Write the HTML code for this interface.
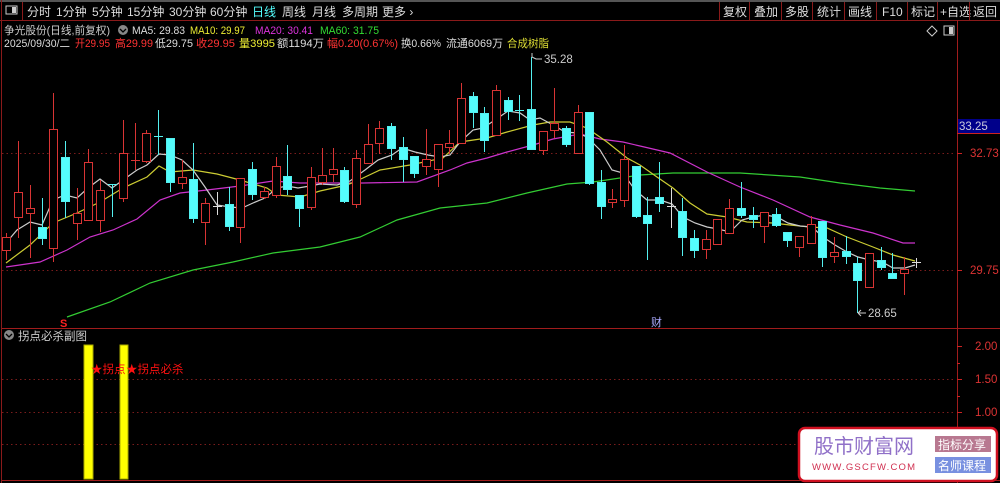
<!DOCTYPE html>
<html><head><meta charset="utf-8">
<style>
body{margin:0;background:#000;width:1000px;height:483px;overflow:hidden;font-family:"Liberation Sans","Noto Sans CJK SC",sans-serif;}
svg{position:absolute;left:0;top:0}
text{font-family:"Liberation Sans","Noto Sans CJK SC",sans-serif;}
</style></head><body>
<svg width="1000" height="483" viewBox="0 0 1000 483">
<rect width="1000" height="483" fill="#000"/>
<rect x="0" y="0" width="1000" height="2" fill="#555"/>
<line x1="0" y1="20.5" x2="1000" y2="20.5" stroke="#8a1a1a"/>
<line x1="1.5" y1="0" x2="1.5" y2="483" stroke="#8a1a1a"/>
<line x1="22.5" y1="2" x2="22.5" y2="20" stroke="#8a1a1a"/>
<rect x="6" y="6" width="11" height="8" fill="none" stroke="#ccc"/><rect x="12" y="7" width="4" height="6" fill="#ccc"/>
<g font-size="12" fill="#ddd">
<text x="27" y="16">分时</text><text x="56" y="16">1分钟</text><text x="92" y="16">5分钟</text><text x="127" y="16">15分钟</text><text x="169" y="16">30分钟</text><text x="210" y="16">60分钟</text>
<text x="252" y="16" fill="#5ff">日线</text><text x="282" y="16">周线</text><text x="312" y="16">月线</text><text x="342" y="16">多周期</text><text x="382" y="16">更多 ›</text>
<text x="723" y="16">复权</text><text x="754" y="16">叠加</text><text x="785" y="16">多股</text><text x="817" y="16">统计</text><text x="848" y="16">画线</text><text x="882" y="16">F10</text><text x="911" y="16">标记</text><text x="940" y="16">+自选</text><text x="973" y="16">返回</text>
</g>
<g stroke="#8a1a1a"><line x1="719.5" y1="2" x2="719.5" y2="20"/><line x1="749.5" y1="2" x2="749.5" y2="20"/><line x1="781.5" y1="2" x2="781.5" y2="20"/><line x1="812.5" y1="2" x2="812.5" y2="20"/><line x1="844.5" y1="2" x2="844.5" y2="20"/><line x1="876.5" y1="2" x2="876.5" y2="20"/><line x1="907.5" y1="2" x2="907.5" y2="20"/><line x1="937.5" y1="2" x2="937.5" y2="20"/><line x1="969.5" y1="2" x2="969.5" y2="20"/></g>
<g font-size="11">
<text x="4" y="34" fill="#ccc" textLength="106" lengthAdjust="spacingAndGlyphs">争光股份(日线,前复权)</text>
<circle cx="123" cy="30" r="5" fill="#888"/><path d="M120 29 L123 32 L126 29" stroke="#000" fill="none" stroke-width="1.3"/>
<text x="132" y="34" fill="#ddd" textLength="53" lengthAdjust="spacingAndGlyphs">MA5: 29.83</text><text x="190" y="34" fill="#ee3" textLength="55" lengthAdjust="spacingAndGlyphs">MA10: 29.97</text><text x="255" y="34" fill="#d3d" textLength="58" lengthAdjust="spacingAndGlyphs">MA20: 30.41</text><text x="320" y="34" fill="#3d3" textLength="59" lengthAdjust="spacingAndGlyphs">MA60: 31.75</text>
<text x="4" y="47" fill="#ddd" textLength="66" lengthAdjust="spacingAndGlyphs">2025/09/30/二</text>
<text x="75" y="47" fill="#f33" textLength="35" lengthAdjust="spacingAndGlyphs">开29.95</text><text x="115" y="47" fill="#f33" textLength="38" lengthAdjust="spacingAndGlyphs">高29.99</text><text x="155" y="47" fill="#ddd" textLength="38" lengthAdjust="spacingAndGlyphs">低29.75</text><text x="196" y="47" fill="#f33" textLength="39" lengthAdjust="spacingAndGlyphs">收29.95</text><text x="239" y="47" fill="#ee3" textLength="36" lengthAdjust="spacingAndGlyphs">量3995</text>
<text x="277" y="47" fill="#ddd" textLength="47" lengthAdjust="spacingAndGlyphs">额1194万</text><text x="327" y="47" fill="#f33" textLength="71" lengthAdjust="spacingAndGlyphs">幅0.20(0.67%)</text><text x="401" y="47" fill="#ddd" textLength="40" lengthAdjust="spacingAndGlyphs">换0.66%</text><text x="446" y="47" fill="#ddd" textLength="57" lengthAdjust="spacingAndGlyphs">流通6069万</text><text x="507" y="47" fill="#dd3" textLength="42" lengthAdjust="spacingAndGlyphs">合成树脂</text>
</g>
<path d="M932 26 L937 31 L932 36 L927 31Z" fill="none" stroke="#ccc"/>
<rect x="944" y="26" width="10" height="9" fill="none" stroke="#ccc"/><rect x="949" y="27" width="4" height="7" fill="#ccc"/>
<line x1="957.5" y1="20" x2="957.5" y2="483" stroke="#a01c1c"/>
<line x1="2" y1="328.5" x2="1000" y2="328.5" stroke="#a01c1c"/>
<line x1="2" y1="480.5" x2="1000" y2="480.5" stroke="#a01c1c"/>
<g stroke="#7a1c1c" stroke-dasharray="1.5,3"><line x1="2" y1="153.5" x2="955" y2="153.5"/><line x1="2" y1="270.5" x2="955" y2="270.5"/><line x1="2" y1="379.5" x2="955" y2="379.5"/><line x1="2" y1="412.5" x2="955" y2="412.5"/><line x1="2" y1="444.5" x2="955" y2="444.5"/></g>
<rect x="958" y="119" width="42" height="15" fill="#00008a"/><line x1="957" y1="133.5" x2="1000" y2="133.5" stroke="#c22"/>
<text x="959" y="130" font-size="11.5" fill="#ccd">33.25</text>
<g font-size="11.5" fill="#d33"><text x="970" y="157">32.73</text><text x="970" y="274">29.75</text><text x="975" y="350">2.00</text><text x="975" y="383">1.50</text><text x="975" y="416">1.00</text></g>
<g stroke="#c22"><line x1="957" y1="153.5" x2="962" y2="153.5"/><line x1="957" y1="270.5" x2="962" y2="270.5"/><line x1="957" y1="346.5" x2="962" y2="346.5"/><line x1="957" y1="363.5" x2="960" y2="363.5"/><line x1="957" y1="379.5" x2="962" y2="379.5"/><line x1="957" y1="396.5" x2="960" y2="396.5"/><line x1="957" y1="412.5" x2="962" y2="412.5"/></g>
<g fill="none" stroke-width="1.2">
<polyline stroke="#3c3" points="67,317 110,302 150,283 193,270 233,262 273,253 320,247 360,237 397,220 440,208 487,203 527,193 567,184 593,182 640,175 673,173 740,173 800,177 840,183 880,188 915,191"/>
<polyline stroke="#c3c" points="6,267 40,262 67,250 90,237 113,230 137,219 160,200 180,193 207,190 240,186 273,181 300,183 320,183 363,183 417,182 450,170 467,163 487,158 507,152 533,145 553,139 580,134 600,139 623,142 640,146 670,153 707,172 740,187 773,200 810,217 840,225 873,233 903,243 915,243"/>
<polyline stroke="#cc3" points="6,263 30,245 53,223 77,213 100,202 123,188 147,177 159,166 170,172 193,170 217,174 240,180 267,188 277,195 300,197 320,191 347,185 363,178 380,170 410,165 443,158 460,142 487,138 507,132 533,125 550,122 570,122 587,128 607,142 627,158 640,165 657,177 673,188 690,203 707,214 727,217 747,222 773,223 790,225 810,227 827,228 847,237 873,247 893,255 915,261"/>
<polyline stroke="#ccc" points="6,243 17,230 30,222 42,225 53,200 65,195 77,198 88,188 100,179 112,188 123,180 137,170 147,165 159,154 170,155 182,160 193,170 205,187 217,205 230,207 242,208 253,203 265,198 277,188 287,186 298,188 310,186 320,184 337,185 350,181 365,170 378,160 392,155 402,148 415,152 428,155 440,157 450,155 460,142 473,130 483,128 495,120 508,111 520,113 530,120 540,118 553,125 565,132 577,133 587,137 600,150 612,170 623,173 635,190 647,200 660,200 672,204 683,217 695,223 707,227 718,229 730,232 742,220 753,217 765,215 777,217 788,223 800,226 812,227 823,237 835,245 847,252 858,257 870,260 882,262 893,268 905,268 915,265"/>
</g>
<g stroke="#d83434" fill="#000" stroke-width="1">
<line x1="6.5" y1="233" x2="6.5" y2="260"/><rect x="2.5" y="237.5" width="8" height="13"/>
<line x1="18.5" y1="141" x2="18.5" y2="238"/><rect x="14.5" y="192.5" width="8" height="25"/>
<line x1="30.5" y1="185" x2="30.5" y2="258"/><rect x="26.5" y="208.5" width="8" height="5"/>
<line x1="53.5" y1="93" x2="53.5" y2="262"/><rect x="49.5" y="129.5" width="8" height="119"/>
<line x1="77.5" y1="188" x2="77.5" y2="240"/><rect x="73.5" y="213.5" width="8" height="10"/>
<line x1="88.5" y1="149" x2="88.5" y2="220"/><rect x="84.5" y="162.5" width="8" height="58"/>
<line x1="100.5" y1="180" x2="100.5" y2="232"/><rect x="96.5" y="190.5" width="8" height="30"/>
<line x1="123.5" y1="120" x2="123.5" y2="202"/><rect x="119.5" y="153.5" width="8" height="45"/>
<line x1="135.5" y1="123" x2="135.5" y2="170"/><line x1="131" y1="160.5" x2="140" y2="160.5"/>
<line x1="146.5" y1="130" x2="146.5" y2="163"/><rect x="142.5" y="133.5" width="8" height="28"/>
<line x1="182.5" y1="160" x2="182.5" y2="189"/><rect x="178.5" y="177.5" width="8" height="6"/>
<line x1="205.5" y1="198" x2="205.5" y2="245"/><rect x="201.5" y="203.5" width="8" height="19"/>
<line x1="240.5" y1="178" x2="240.5" y2="243"/><rect x="236.5" y="178.5" width="8" height="49"/>
<line x1="264.5" y1="187" x2="264.5" y2="199"/><rect x="260.5" y="191.5" width="8" height="6"/>
<line x1="276.5" y1="157" x2="276.5" y2="198"/><rect x="272.5" y="166.5" width="8" height="29"/>
<line x1="311.5" y1="167" x2="311.5" y2="210"/><rect x="307.5" y="177.5" width="8" height="30"/>
<line x1="322.5" y1="148" x2="322.5" y2="185"/><rect x="318.5" y="175.5" width="8" height="7"/>
<line x1="333.5" y1="148" x2="333.5" y2="182"/><rect x="329.5" y="169.5" width="8" height="5"/>
<line x1="356.5" y1="150" x2="356.5" y2="208"/><rect x="352.5" y="158.5" width="8" height="46"/>
<line x1="368.5" y1="124" x2="368.5" y2="163"/><rect x="364.5" y="144.5" width="8" height="19"/>
<line x1="379.5" y1="121" x2="379.5" y2="154"/><rect x="375.5" y="128.5" width="8" height="15"/>
<line x1="426.5" y1="129" x2="426.5" y2="175"/><rect x="422.5" y="159.5" width="8" height="7"/>
<line x1="438.5" y1="144" x2="438.5" y2="187"/><rect x="434.5" y="144.5" width="8" height="25"/>
<line x1="449.5" y1="130" x2="449.5" y2="154"/><rect x="445.5" y="143.5" width="8" height="4"/>
<line x1="461.5" y1="83" x2="461.5" y2="143"/><rect x="457.5" y="98.5" width="8" height="45"/>
<line x1="496.5" y1="85" x2="496.5" y2="135"/><rect x="492.5" y="90.5" width="8" height="45"/>
<line x1="543.5" y1="131" x2="543.5" y2="155"/><rect x="539.5" y="131.5" width="8" height="19"/>
<line x1="554.5" y1="88" x2="554.5" y2="138"/><rect x="550.5" y="123.5" width="8" height="7"/>
<line x1="578.5" y1="105" x2="578.5" y2="153"/><rect x="574.5" y="112.5" width="8" height="41"/>
<line x1="612.5" y1="189" x2="612.5" y2="208"/><rect x="608.5" y="199.5" width="8" height="3"/>
<line x1="624.5" y1="145" x2="624.5" y2="207"/><rect x="620.5" y="159.5" width="8" height="41"/>
<line x1="706.5" y1="230" x2="706.5" y2="259"/><rect x="702.5" y="239.5" width="8" height="10"/>
<line x1="717.5" y1="219" x2="717.5" y2="244"/><rect x="713.5" y="219.5" width="8" height="25"/>
<line x1="729.5" y1="199" x2="729.5" y2="233"/><rect x="725.5" y="208.5" width="8" height="25"/>
<line x1="764.5" y1="212" x2="764.5" y2="243"/><rect x="760.5" y="212.5" width="8" height="14"/>
<line x1="799.5" y1="236" x2="799.5" y2="257"/><rect x="795.5" y="236.5" width="8" height="11"/>
<line x1="811.5" y1="216" x2="811.5" y2="243"/><rect x="807.5" y="224.5" width="8" height="19"/>
<line x1="834.5" y1="237" x2="834.5" y2="263"/><rect x="830.5" y="252.5" width="8" height="4"/>
<line x1="869.5" y1="253" x2="869.5" y2="287"/><rect x="865.5" y="253.5" width="8" height="34"/>
<line x1="904.5" y1="257" x2="904.5" y2="295"/><rect x="900.5" y="269.5" width="8" height="4"/>
</g>
<g stroke="#54f0f0" fill="#54fcfc" stroke-width="1">
<line x1="42.5" y1="198" x2="42.5" y2="245"/><rect x="38.5" y="227.5" width="8" height="11"/>
<line x1="65.5" y1="141" x2="65.5" y2="218"/><rect x="61.5" y="157.5" width="8" height="44"/>
<line x1="112.5" y1="184" x2="112.5" y2="217"/><line x1="108" y1="184.5" x2="117" y2="184.5"/>
<line x1="158.5" y1="110" x2="158.5" y2="155"/><line x1="154" y1="136.5" x2="163" y2="136.5"/>
<line x1="170.5" y1="138" x2="170.5" y2="192"/><rect x="166.5" y="138.5" width="8" height="44"/>
<line x1="193.5" y1="143" x2="193.5" y2="223"/><rect x="189.5" y="179.5" width="8" height="39"/>
<line x1="229.5" y1="187" x2="229.5" y2="231"/><rect x="225.5" y="204.5" width="8" height="22"/>
<line x1="252.5" y1="162" x2="252.5" y2="200"/><rect x="248.5" y="169.5" width="8" height="25"/>
<line x1="287.5" y1="145" x2="287.5" y2="195"/><rect x="283.5" y="176.5" width="8" height="13"/>
<line x1="299.5" y1="195" x2="299.5" y2="227"/><rect x="295.5" y="195.5" width="8" height="13"/>
<line x1="344.5" y1="167" x2="344.5" y2="203"/><rect x="340.5" y="170.5" width="8" height="31"/>
<line x1="391.5" y1="123" x2="391.5" y2="160"/><rect x="387.5" y="126.5" width="8" height="22"/>
<line x1="403.5" y1="137" x2="403.5" y2="182"/><rect x="399.5" y="147.5" width="8" height="12"/>
<line x1="414.5" y1="156" x2="414.5" y2="178"/><rect x="410.5" y="156.5" width="8" height="17"/>
<line x1="473.5" y1="92" x2="473.5" y2="128"/><rect x="469.5" y="96.5" width="8" height="16"/>
<line x1="484.5" y1="107" x2="484.5" y2="152"/><rect x="480.5" y="113.5" width="8" height="27"/>
<line x1="508.5" y1="97" x2="508.5" y2="120"/><rect x="504.5" y="100.5" width="8" height="11"/>
<line x1="519.5" y1="95" x2="519.5" y2="121"/><line x1="515" y1="110.5" x2="524" y2="110.5"/>
<line x1="531.5" y1="57" x2="531.5" y2="149"/><rect x="527.5" y="109.5" width="8" height="40"/>
<line x1="566.5" y1="126" x2="566.5" y2="147"/><rect x="562.5" y="128.5" width="8" height="16"/>
<line x1="589.5" y1="112" x2="589.5" y2="185"/><rect x="585.5" y="112.5" width="8" height="71"/>
<line x1="601.5" y1="170" x2="601.5" y2="219"/><rect x="597.5" y="182.5" width="8" height="24"/>
<line x1="636.5" y1="166" x2="636.5" y2="218"/><rect x="632.5" y="166.5" width="8" height="50"/>
<line x1="647.5" y1="197" x2="647.5" y2="260"/><rect x="643.5" y="215.5" width="8" height="8"/>
<line x1="659.5" y1="162" x2="659.5" y2="212"/><rect x="655.5" y="197.5" width="8" height="6"/>
<line x1="682.5" y1="198" x2="682.5" y2="256"/><rect x="678.5" y="211.5" width="8" height="26"/>
<line x1="694.5" y1="230" x2="694.5" y2="258"/><rect x="690.5" y="238.5" width="8" height="12"/>
<line x1="741.5" y1="182" x2="741.5" y2="218"/><rect x="737.5" y="208.5" width="8" height="7"/>
<line x1="753.5" y1="207" x2="753.5" y2="228"/><rect x="749.5" y="215.5" width="8" height="4"/>
<line x1="776.5" y1="208" x2="776.5" y2="227"/><rect x="772.5" y="214.5" width="8" height="11"/>
<line x1="787.5" y1="232" x2="787.5" y2="247"/><rect x="783.5" y="232.5" width="8" height="8"/>
<line x1="822.5" y1="221" x2="822.5" y2="267"/><rect x="818.5" y="221.5" width="8" height="36"/>
<line x1="846.5" y1="236" x2="846.5" y2="264"/><rect x="842.5" y="251.5" width="8" height="5"/>
<line x1="857.5" y1="257" x2="857.5" y2="313"/><rect x="853.5" y="263.5" width="8" height="17"/>
<line x1="881.5" y1="247" x2="881.5" y2="270"/><rect x="877.5" y="260.5" width="8" height="7"/>
<line x1="892.5" y1="253" x2="892.5" y2="278"/><rect x="888.5" y="273.5" width="8" height="5"/>
</g>
<g stroke="#ddd"><line x1="217.5" y1="192" x2="217.5" y2="215"/><line x1="213" y1="206.5" x2="222" y2="206.5"/><line x1="671.5" y1="188" x2="671.5" y2="228"/><line x1="667" y1="206.5" x2="676" y2="206.5"/><line x1="916.5" y1="258" x2="916.5" y2="268"/><line x1="912" y1="262.5" x2="921" y2="262.5"/></g>
<path d="M532 57 L532 53 M532 57 L536 59 L542 59" stroke="#ccc" fill="none"/>
<text x="544" y="63" font-size="11.5" fill="#ccc">35.28</text>
<path d="M858 313 L866 313 M858 313 L861 310 M858 313 L861 316" stroke="#ccc" fill="none"/>
<text x="868" y="317" font-size="11.5" fill="#ccc">28.65</text>
<text x="60" y="327" font-size="11" font-weight="bold" fill="#f22">S</text>
<text x="651" y="326" font-size="11" fill="#aaf">财</text>
<circle cx="9" cy="335" r="5" fill="#888"/><path d="M6 334 L9 337 L12 334" stroke="#000" fill="none" stroke-width="1.3"/>
<text x="18" y="340" font-size="11.5" fill="#ccc">拐点必杀副图</text>
<rect x="84" y="345" width="9" height="134" fill="#ff0" stroke="#aa0"/>
<rect x="120" y="345" width="8" height="134" fill="#ff0" stroke="#aa0"/>
<text x="91" y="373" font-size="11.5" fill="#f11">★拐点</text>
<text x="126" y="373" font-size="11.5" fill="#f11">★拐点必杀</text>
<rect x="799" y="428" width="198" height="53" rx="6" fill="#fff" stroke="#d01020" stroke-width="2.5"/>
<text x="814" y="453" font-size="20" fill="#9070c8" font-family="Liberation Serif,'Noto Serif CJK SC',serif">股市财富网</text>
<text x="812" y="470" font-size="9.5" fill="#d03050" font-family="Liberation Serif,serif" letter-spacing="1.2">WWW.GSCFW.COM</text>
<rect x="935" y="436" width="56" height="16" fill="#b87890"/><text x="938" y="449" font-size="12" fill="#fff">指标分享</text>
<rect x="935" y="457" width="56" height="16" fill="#7890e0"/><text x="938" y="470" font-size="12" fill="#fff">名师课程</text>
</svg>
</body></html>
